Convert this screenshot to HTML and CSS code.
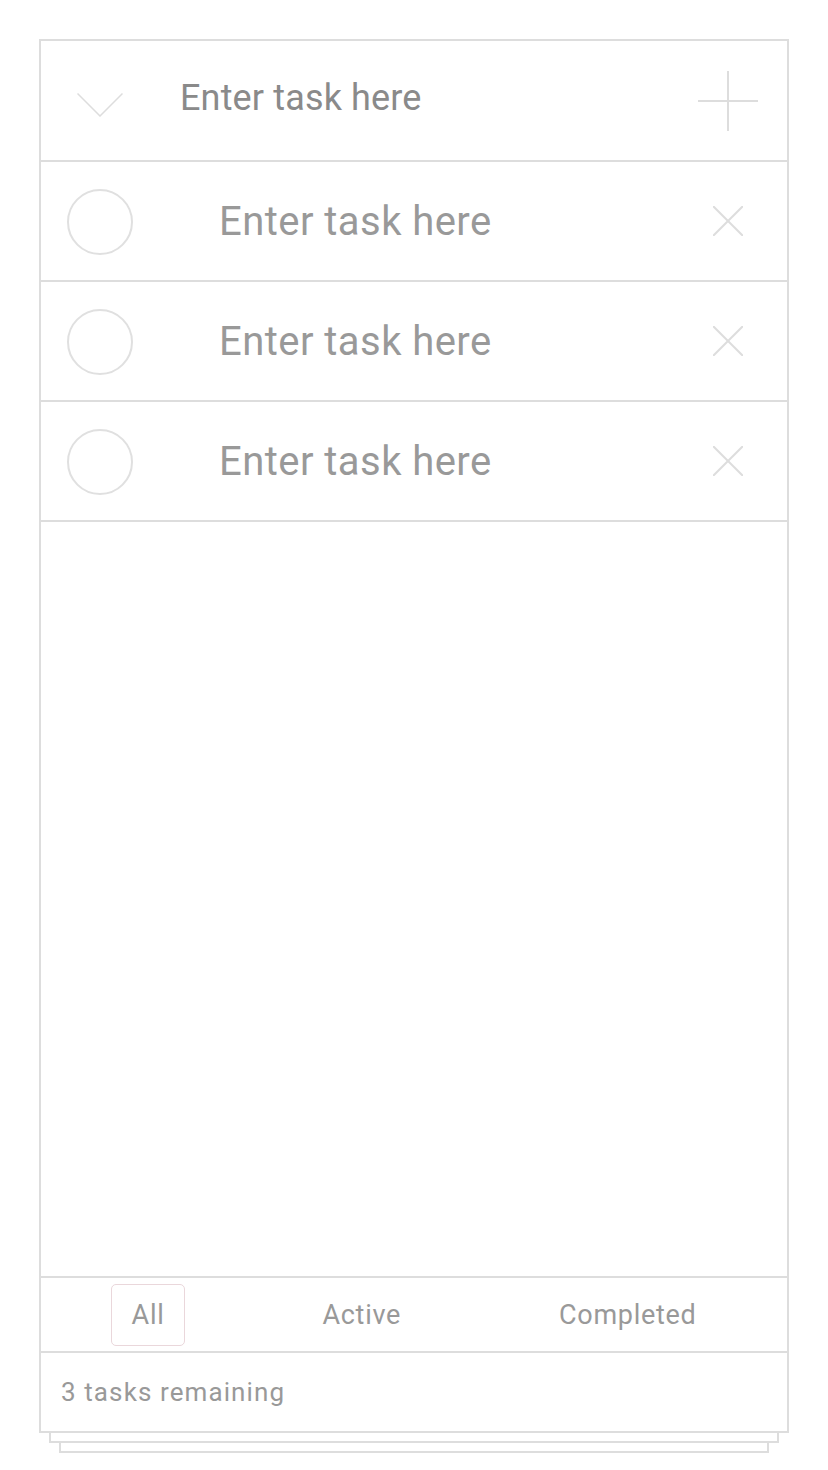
FILE: index.html
```html
<!DOCTYPE html>
<html lang="en">
<head>
<meta charset="utf-8">
<title>Todo</title>
<link rel="stylesheet" href="styles.css">
</head>
<body>
<div class="app">
  <div class="card">
    <div class="header">
      <svg class="chevron" width="46" height="24" viewBox="0 0 46 24"><polyline points="0.5,0.5 23,23 45.5,0.5" fill="none" stroke="#dddddd" stroke-width="1.5"/></svg>
      <span class="new-task">Enter task here</span>
      <svg class="plus" width="60" height="60" viewBox="0 0 60 60"><line x1="30" y1="0" x2="30" y2="60" stroke="#dddddd" stroke-width="2"/><line x1="0" y1="30" x2="60" y2="30" stroke="#dddddd" stroke-width="2"/></svg>
    </div>
    <ul class="list">
      <li class="row">
        <span class="check"></span>
        <span class="task">Enter task here</span>
        <svg class="del" width="30" height="30" viewBox="0 0 30 30"><line x1="0" y1="0" x2="30" y2="30" stroke="#dddddd" stroke-width="2"/><line x1="30" y1="0" x2="0" y2="30" stroke="#dddddd" stroke-width="2"/></svg>
      </li>
      <li class="row">
        <span class="check"></span>
        <span class="task">Enter task here</span>
        <svg class="del" width="30" height="30" viewBox="0 0 30 30"><line x1="0" y1="0" x2="30" y2="30" stroke="#dddddd" stroke-width="2"/><line x1="30" y1="0" x2="0" y2="30" stroke="#dddddd" stroke-width="2"/></svg>
      </li>
      <li class="row">
        <span class="check"></span>
        <span class="task">Enter task here</span>
        <svg class="del" width="30" height="30" viewBox="0 0 30 30"><line x1="0" y1="0" x2="30" y2="30" stroke="#dddddd" stroke-width="2"/><line x1="30" y1="0" x2="0" y2="30" stroke="#dddddd" stroke-width="2"/></svg>
      </li>
    </ul>
    <div class="spacer"></div>
    <div class="filters">
      <span class="filter selected">All</span>
      <span class="filter">Active</span>
      <span class="filter">Completed</span>
    </div>
    <div class="count">3 tasks remaining</div>
  </div>
  <div class="sheet sheet1"></div>
  <div class="sheet sheet2"></div>
</div>
</body>
</html>
```
FILE: styles.css
```css
* { box-sizing: border-box; }
html, body { margin: 0; padding: 0; background: #ffffff; }
body { font-family: Roboto, "Liberation Sans", sans-serif; }

.app {
  padding: 39px 0 0 39px;
  width: 789px;
}

.card {
  width: 750px;
  height: 1394px;
  border: 2px solid #dddddd;
  display: flex;
  flex-direction: column;
  background: #fff;
}

.header {
  height: 121px;
  border-bottom: 2px solid #dddddd;
  display: flex;
  align-items: center;
  padding: 0 29px 0 36px;
  flex: none;
}
.chevron { flex: none; margin-top: 8px; }
.new-task {
  margin-left: 57px;
  font-size: 36px;
  letter-spacing: 0.15px;
  color: #8a8a8a;
  flex: 1;
  padding-bottom: 6px;
}
.plus { flex: none; }

.list { list-style: none; margin: 0; padding: 0; flex: none; }
.row {
  height: 120px;
  border-bottom: 2px solid #dddddd;
  display: flex;
  align-items: center;
  padding: 0 44px 0 26px;
}
.check {
  width: 66px;
  height: 66px;
  border: 2px solid #e0e0e0;
  border-radius: 50%;
  flex: none;
  margin-top: 1px;
}
.task {
  margin-left: 86px;
  font-size: 40px;
  letter-spacing: 0.45px;
  color: #999999;
  flex: 1;
}
.del { flex: none; }

.spacer { flex: 1; border-bottom: 2px solid #dddddd; }

.filters {
  height: 75px;
  border-bottom: 2px solid #dddddd;
  display: flex;
  align-items: center;
  justify-content: center;
  gap: 116px;
  flex: none;
}
.filter {
  font-size: 27px;
  letter-spacing: 0.7px;
  color: #999999;
  padding: 0 20px;
  height: 62px;
  line-height: 60px;
  border: 1px solid transparent;
  border-radius: 5px;
}
.filter.selected { border-color: #ead7db; }

.count {
  height: 78px;
  display: flex;
  align-items: center;
  padding-left: 20px;
  font-size: 26px;
  letter-spacing: 1.1px;
  color: #999999;
  flex: none;
}

.sheet {
  height: 10px;
  border: 2px solid #dddddd;
  border-top: none;
}
.sheet1 { margin-left: 10px; width: 730px; }
.sheet2 { margin-left: 20px; width: 710px; }
```
